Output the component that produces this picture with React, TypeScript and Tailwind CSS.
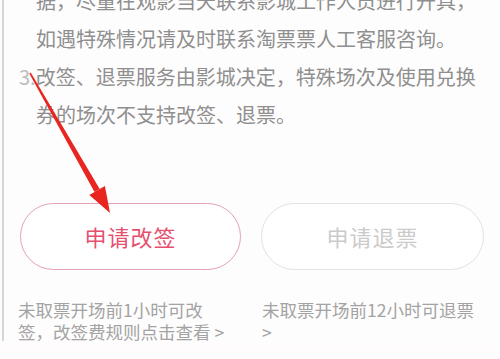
import { type ReactNode } from "react";

const font = { fontFamily: '"Noto Sans CJK SC", "Noto Sans", sans-serif' };

function Line({ children, className = "" }: { children: ReactNode; className?: string }) {
    return <div className={`whitespace-nowrap leading-[38px] ${className}`}>{children}</div>;
}

function Arrow() {
    return (
        <svg className="absolute left-0 top-0 pointer-events-none" width="500" height="359">
            <polygon points="29.3,73.4 30.7,72.6 99.7,188.9 94.5,191.9" fill="#e8261f" />
            <polygon points="110,213 104.9,185.9 89.3,194.9" fill="#e8261f" />
        </svg>
    );
}

export default function App() {
    return (
        <div className="relative w-[500px] h-[359px] overflow-hidden bg-[#fefcfc]" style={font}>
            <div className="ml-[2px] h-full border-l-2 border-[#d6d6d6] bg-[#fefdfd]">
                <section className="pl-[32px] mt-[-18px] text-[20px] text-[#8f8f8f]">
                    <Line>据，尽量在观影当天联系影城工作人员进行开具，</Line>
                    <Line>如遇特殊情况请及时联系淘票票人工客服咨询。</Line>
                    <Line className="ml-[-17px]">
                        <span className="text-[#bdbdbd]">3.</span>改签、退票服务由影城决定，特殊场次及使用兑换
                    </Line>
                    <Line>券的场次不支持改签、退票。</Line>
                </section>

                <div className="flex gap-[20px] pl-[16px] mt-[69px]">
                    <button className="w-[221px] h-[67px] rounded-full border-[1.5px] border-[#e3a3b1] bg-white text-[22px] text-[#e64f6e] tracking-[1px]">
                        申请改签
                    </button>
                    <button className="w-[223px] h-[67px] rounded-full border-[1.5px] border-[#e2e2e2] bg-white text-[22px] text-[#cbcbcb] tracking-[1px]">
                        申请退票
                    </button>
                </div>

                <div className="flex gap-[23px] pl-[14px] mt-[29px] text-[17.5px] leading-[22px] text-[#a3a3a3]">
                    <div className="w-[221px] whitespace-nowrap">
                        <div>未取票开场前1小时可改</div>
                        <div>签，改签费规则点击查看 &gt;</div>
                    </div>
                    <div className="whitespace-nowrap">
                        <div>未取票开场前12小时可退票</div>
                        <div>&gt;</div>
                    </div>
                </div>
            </div>
            <Arrow />
        </div>
    );
}
